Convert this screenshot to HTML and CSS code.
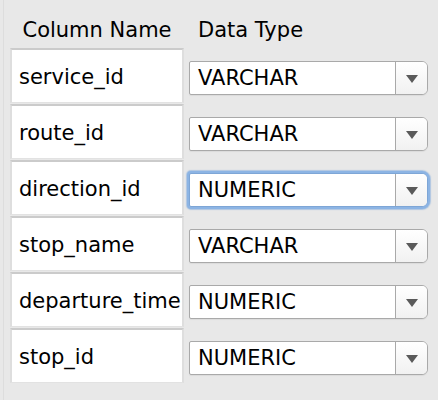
FILE: index.html
```html
<!DOCTYPE html>
<html>
<head>
<meta charset="utf-8">
<link rel="stylesheet" href="styles.css">
</head>
<body>
<div class="panel">
  <div class="table">
    <div class="head name-head">Column Name</div>
    <div class="head type-head">Data Type</div>

    <div class="cell">service_id</div>
    <div class="select"><span class="value">VARCHAR</span><span class="arrow"><i></i></span></div>

    <div class="cell">route_id</div>
    <div class="select"><span class="value">VARCHAR</span><span class="arrow"><i></i></span></div>

    <div class="cell">direction_id</div>
    <div class="select focused"><span class="value">NUMERIC</span><span class="arrow"><i></i></span></div>

    <div class="cell">stop_name</div>
    <div class="select"><span class="value">VARCHAR</span><span class="arrow"><i></i></span></div>

    <div class="cell">departure_time</div>
    <div class="select"><span class="value">NUMERIC</span><span class="arrow"><i></i></span></div>

    <div class="cell">stop_id</div>
    <div class="select"><span class="value">NUMERIC</span><span class="arrow"><i></i></span></div>
  </div>
</div>
</body>
</html>
```
FILE: styles.css
```css
html, body {
  margin: 0;
  padding: 0;
  background: #e8e8e8;
}
body {
  width: 438px;
  height: 400px;
  overflow: hidden;
  font-family: "DejaVu Sans", "Liberation Sans", sans-serif;
  color: #000;
}
.panel {
  height: 400px;
  margin-left: 3px;
  border-left: 1px solid #dddddd;
  padding-left: 6px;
  box-sizing: border-box;
}
.table {
  display: grid;
  grid-template-columns: 174px 239px;
  grid-auto-rows: 56px;
  column-gap: 5px;
  grid-template-rows: 48px;
}
.head {
  font-size: 21px;
  line-height: 24px;
  padding-top: 18px;
  white-space: nowrap;
}
.name-head {
  text-align: center;
}
.type-head {
  padding-left: 9px;
}
.cell {
  box-sizing: border-box;
  height: 55px;
  background: #fff;
  border-top: 2px solid #cbcbcb;
  border-left: 2px solid #dedede;
  border-right: 2px solid #dedede;
  border-bottom: 1px solid #e2e2e2;
  font-size: 21px;
  line-height: 24px;
  padding: 15px 0 0 7px;
  white-space: nowrap;
  overflow: hidden;
}
.select {
  align-self: start;
  margin-top: 13px;
  height: 34px;
  box-sizing: border-box;
  display: flex;
  background: #fff;
  border: 1px solid #a9a9a9;
  border-radius: 2px 6px 6px 2px;
  box-shadow: 0 1px 1px rgba(0,0,0,0.06);
}
.select.focused {
  border-color: #7ea6d6;
  box-shadow: 0 0 0 2px #8cb4e4, 0 0 1px 3px rgba(120,165,220,0.5);
}
.value {
  flex: 1;
  font-size: 21px;
  line-height: 32px;
  padding-left: 8px;
  white-space: nowrap;
}
.arrow {
  width: 31px;
  border-left: 1px solid #a9a9a9;
  border-radius: 0 5px 5px 0;
  background: linear-gradient(#ffffff, #f1f1f1);
  display: flex;
  align-items: center;
  justify-content: center;
}
.arrow i {
  display: block;
  width: 0;
  height: 0;
  border-left: 6px solid transparent;
  border-right: 6px solid transparent;
  border-top: 8px solid #5a5a5a;
  margin-top: 1px;
}
```
